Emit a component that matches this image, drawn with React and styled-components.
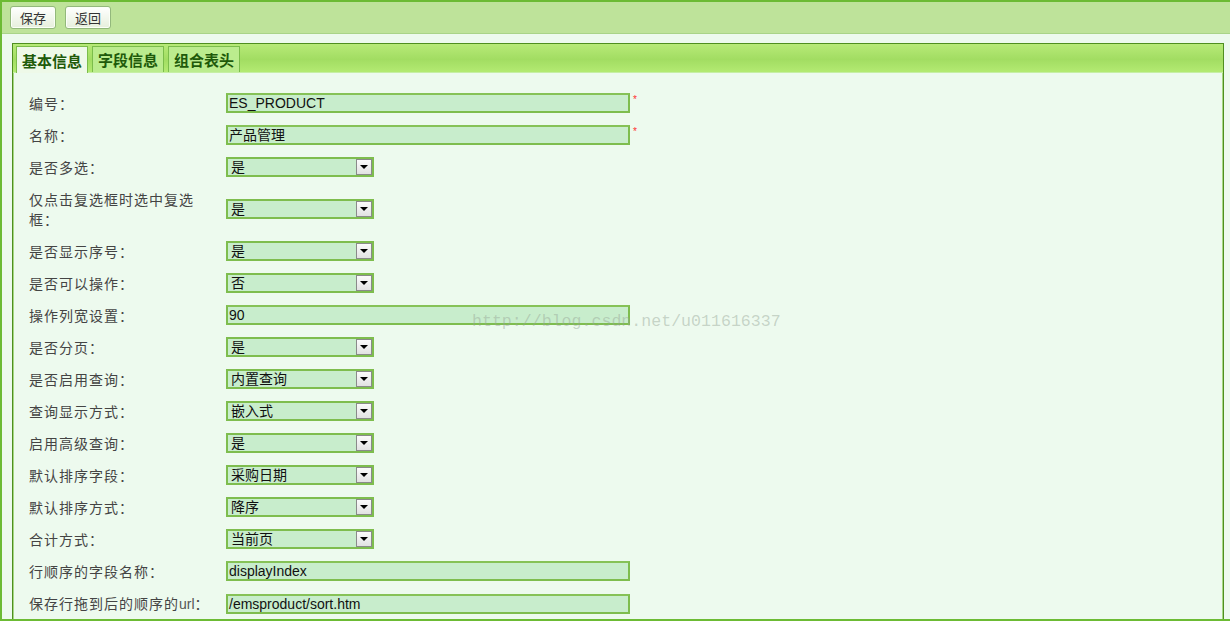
import React from "react";
import styled, { createGlobalStyle } from "styled-components";

const GlobalStyle = createGlobalStyle`
  html, body {
    margin: 0;
    padding: 0;
    background: #edfaee;
    font-family: "Liberation Sans", "Noto Sans CJK SC", sans-serif;
  }
`;

const Frame = styled.div`
  position: relative;
  height: 621px;
  box-sizing: border-box;
  border-left: 2px solid #6cbb34;
  border-top: 2px solid #6cbb34;
  border-bottom: 2px solid #6cbb34;
  background: #edfaee;
  overflow: hidden;
`;

const Toolbar = styled.div`
  display: flex;
  align-items: center;
  gap: 9px;
  height: 31px;
  padding: 0 8px;
  background: #bee39a;
  border-bottom: 1px solid #a9d488;
`;

const ToolButton = styled.button`
  height: 23px;
  padding: 0 9px;
  font-family: "Noto Sans CJK SC", sans-serif;
  font-size: 13px;
  line-height: 20px;
  color: #333;
  border: 1px solid #93b87c;
  border-radius: 3px;
  background: linear-gradient(#ffffff, #e6efdc);
  box-shadow: inset 0 0 0 1px #fbfff7;
  cursor: pointer;
`;

const Body = styled.div`
  padding: 9px 6px 0 10px;
`;

const Panel = styled.div`
  border: 1px solid #4f8f20;
  box-shadow: inset 0 0 0 1px #a6d884;
  background: #edfaee;
  height: 600px;
`;

const TabBar = styled.div`
  display: flex;
  align-items: flex-end;
  gap: 4px;
  height: 28px;
  padding: 0 3px;
  background: linear-gradient(#b7ea78, #a2dd62 55%, #b3ea72);
  border-bottom: 1px solid #c6efa4;
`;

const Tab = styled.div`
  box-sizing: border-box;
  padding: 0 5px;
  display: flex;
  align-items: center;
  font-family: "Noto Sans CJK SC", sans-serif;
  font-size: 15px;
  font-weight: bold;
  color: #1e5a0a;
  border: 1px solid #7bbd4b;
  border-bottom: none;
  background: ${(p) => (p.active ? "#eef9e8" : "#bbec8e")};
  margin-bottom: ${(p) => (p.active ? "-1px" : "0")};
  height: ${(p) => (p.active ? "27px" : "26px")};
`;

const Form = styled.div`
  display: flex;
  flex-direction: column;
  padding: 14px 0 0 16px;
`;

const Row = styled.div`
  display: flex;
  align-items: center;
  min-height: 32px;
`;

const Label = styled.div`
  width: 197px;
  flex-shrink: 0;
  padding: 6px 0;
  box-sizing: border-box;
  font-family: "Noto Sans CJK SC", sans-serif;
  font-size: 14px;
  letter-spacing: 1px;
  line-height: 20px;
  color: #444;
`;

const Url = styled.span`
  font-family: "Liberation Sans", sans-serif;
  letter-spacing: 0;
  color: #555;
`;

const Field = styled.div`
  display: flex;
  align-items: center;
`;

const TextBox = styled.div`
  width: 404px;
  height: 20px;
  box-sizing: border-box;
  border: 2px solid #7ebd4e;
  border-top-color: #86c257;
  background: #c8edcc;
  padding: 0 1px;
  font-size: 14px;
  line-height: 16px;
  color: #111;
  white-space: nowrap;
`;

const Required = styled.span`
  margin-left: 3px;
  margin-top: -8px;
  color: #ff3030;
  font-size: 10px;
`;

const SelectBox = styled.div`
  width: 148px;
  height: 20px;
  box-sizing: border-box;
  border: 2px solid #7ebd4e;
  background: #c8edcc;
  display: flex;
  align-items: stretch;
  font-size: 14px;
  line-height: 16px;
  color: #111;
`;

const SelectValue = styled.div`
  flex: 1;
  padding: 0 3px;
`;

const Arrow = styled.div`
  width: 16px;
  box-sizing: border-box;
  border: 1px solid #8a8a8a;
  background: linear-gradient(#fbfbfb, #e2e2e2);
  display: flex;
  align-items: center;
  justify-content: center;
  &::after {
    content: "";
    border-left: 4px solid transparent;
    border-right: 4px solid transparent;
    border-top: 4px solid #000;
  }
`;

const Watermark = styled.div`
  position: absolute;
  left: 470px;
  top: 310px;
  font-family: "Liberation Mono", monospace;
  font-size: 16.6px;
  color: rgba(150, 165, 150, 0.45);
  pointer-events: none;
  white-space: nowrap;
`;

const fields = [
  { label: "编号：", type: "text", value: "ES_PRODUCT", required: true },
  { label: "名称：", type: "text", value: "产品管理", required: true },
  { label: "是否多选：", type: "select", value: "是" },
  { label: <>仅点击复选框时选中复选<br />框：</>, type: "select", value: "是" },
  { label: "是否显示序号：", type: "select", value: "是" },
  { label: "是否可以操作：", type: "select", value: "否" },
  { label: "操作列宽设置：", type: "text", value: "90" },
  { label: "是否分页：", type: "select", value: "是" },
  { label: "是否启用查询：", type: "select", value: "内置查询" },
  { label: "查询显示方式：", type: "select", value: "嵌入式" },
  { label: "启用高级查询：", type: "select", value: "是" },
  { label: "默认排序字段：", type: "select", value: "采购日期" },
  { label: "默认排序方式：", type: "select", value: "降序" },
  { label: "合计方式：", type: "select", value: "当前页" },
  { label: "行顺序的字段名称：", type: "text", value: "displayIndex" },
  { label: <>保存行拖到后的顺序的<Url>url</Url>：</>, type: "text", value: "/emsproduct/sort.htm" },
];

const App = () => (
  <>
    <GlobalStyle />
    <Frame>
      <Toolbar>
        <ToolButton>保存</ToolButton>
        <ToolButton>返回</ToolButton>
      </Toolbar>
      <Body>
        <Panel>
          <TabBar>
            <Tab active>基本信息</Tab>
            <Tab>字段信息</Tab>
            <Tab>组合表头</Tab>
          </TabBar>
          <Form>
            {fields.map((f, i) => (
              <Row key={i}>
                <Label>{f.label}</Label>
                <Field>
                  {f.type === "text" ? (
                    <TextBox>{f.value}</TextBox>
                  ) : (
                    <SelectBox>
                      <SelectValue>{f.value}</SelectValue>
                      <Arrow />
                    </SelectBox>
                  )}
                  {f.required && <Required>*</Required>}
                </Field>
              </Row>
            ))}
          </Form>
        </Panel>
      </Body>
      <Watermark>http://blog.csdn.net/u011616337</Watermark>
    </Frame>
  </>
);

export default App;
